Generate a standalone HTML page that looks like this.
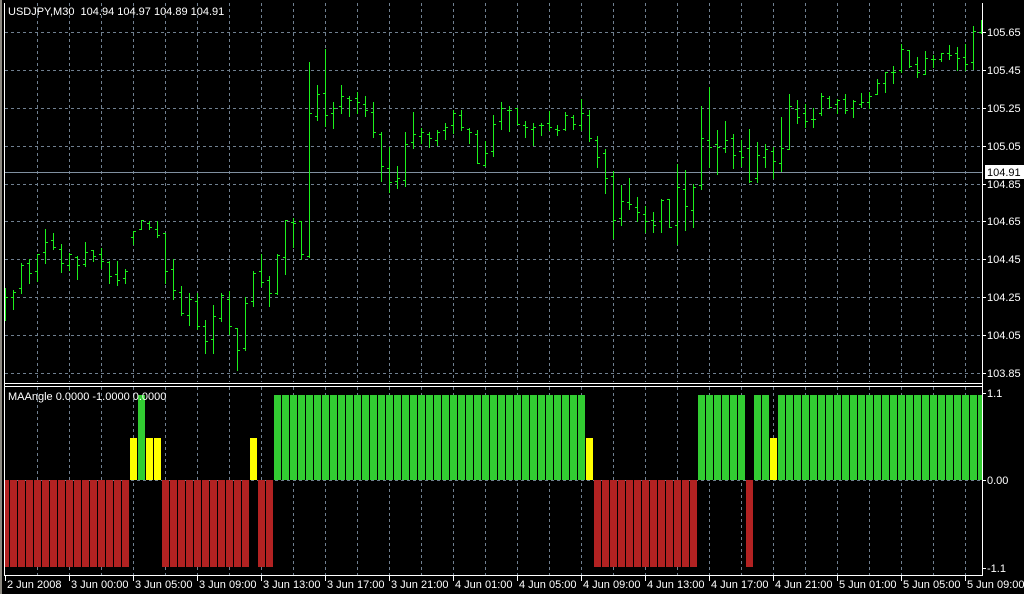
<!DOCTYPE html>
<html><head><meta charset="utf-8"><style>
html,body{margin:0;padding:0;background:#000;width:1024px;height:594px;overflow:hidden}
svg{display:block}
text{font-family:"Liberation Sans",sans-serif;font-size:11px;fill:#fff}
</style></head><body>
<svg id="s" width="1024" height="594" xmlns="http://www.w3.org/2000/svg" shape-rendering="crispEdges">
<rect width="1024" height="594" fill="#000"/>
<rect x="0" y="0" width="2" height="594" fill="#8c8880"/>
<g id="grid" stroke="#708090" stroke-width="1" stroke-dasharray="3,3"></g>
<line x1="4" y1="172.5" x2="982" y2="172.5" stroke="#8090a0"/>
<g id="bars" stroke="#1cf01c" stroke-width="1"></g>
<g id="hist"></g>
<g stroke="#fff" fill="none">
<line x1="4.5" y1="3" x2="4.5" y2="576"/>
<line x1="982.5" y1="3" x2="982.5" y2="576"/>
<line x1="4" y1="383.5" x2="983" y2="383.5"/>
<line x1="4" y1="386.5" x2="983" y2="386.5"/>
<line x1="4" y1="575.5" x2="983" y2="575.5"/>
</g>
<g id="ticks" stroke="#fff"></g>
<rect x="985" y="165" width="40" height="14" fill="#fff"/>
<text x="8" y="15">USDJPY,M30&#160;&#160;104.94 104.97 104.89 104.91</text>
<text x="8" y="400">MAAngle 0.0000 -1.0000 0.0000</text>
<text x="987" y="36">105.65</text>
<text x="987" y="74">105.45</text>
<text x="987" y="112">105.25</text>
<text x="987" y="150">105.05</text>
<text x="987" y="176" style="fill:#000">104.91</text>
<text x="987" y="188">104.85</text>
<text x="987" y="225">104.65</text>
<text x="987" y="263">104.45</text>
<text x="987" y="301">104.25</text>
<text x="987" y="339">104.05</text>
<text x="987" y="377">103.85</text>
<text x="987" y="397">1.1</text>
<text x="987" y="484">0.00</text>
<text x="987" y="572">-1.1</text>
<text x="7" y="588">2 Jun 2008</text>
<text x="71" y="588">3 Jun 00:00</text>
<text x="135" y="588">3 Jun 05:00</text>
<text x="199" y="588">3 Jun 09:00</text>
<text x="263" y="588">3 Jun 13:00</text>
<text x="327" y="588">3 Jun 17:00</text>
<text x="391" y="588">3 Jun 21:00</text>
<text x="455" y="588">4 Jun 01:00</text>
<text x="519" y="588">4 Jun 05:00</text>
<text x="583" y="588">4 Jun 09:00</text>
<text x="647" y="588">4 Jun 13:00</text>
<text x="711" y="588">4 Jun 17:00</text>
<text x="775" y="588">4 Jun 21:00</text>
<text x="839" y="588">5 Jun 01:00</text>
<text x="903" y="588">5 Jun 05:00</text>
<text x="967" y="588">5 Jun 09:00</text>
</svg>
<script>
var NS="http://www.w3.org/2000/svg";
function el(p,t,a){var e=document.createElementNS(NS,t);for(var k in a)e.setAttribute(k,a[k]);p.appendChild(e);return e;}
var g=document.getElementById('grid');
[32,70,108,146,184,221,259,297,335,373,480].forEach(function(y){el(g,'line',{x1:5,y1:y+.5,x2:982,y2:y+.5});});
for(var x=37;x<982;x+=32){el(g,'line',{x1:x+.5,y1:3,x2:x+.5,y2:382});el(g,'line',{x1:x+.5,y1:387,x2:x+.5,y2:575});}
var tk=document.getElementById('ticks');
for(var x=5;x<982;x+=64){el(tk,'line',{x1:x+.5,y1:576,x2:x+.5,y2:581});}
[32,70,108,146,184,221,259,297,335,373,393,480,568].forEach(function(y){el(tk,'line',{x1:982,y1:y+.5,x2:986,y2:y+.5});});
var d=[[288,320,295,297],[290,309,297,292],[263,293,288,265],[259,283,263,273],[254,281,271,254],[229,263,252,242],[233,249,240,247],[244,272,249,263],[253,270,265,254],[256,279,257,265],[242,266,264,252],[250,261,250,256],[248,268,254,261],[261,283,262,276],[261,285,274,280],[269,283,278,271],[231,244,237,231],[220,229,229,220],[221,229,223,227],[221,237,229,235],[233,283,233,271],[259,299,269,290],[286,315,292,313],[293,325,315,299],[293,329,301,326],[320,353,326,341],[305,353,339,316],[293,321,318,295],[291,334,299,326],[328,370,328,350],[297,350,348,303],[271,306,301,273],[254,286,271,282],[276,306,280,293],[254,294,293,255],[220,274,257,220],[218,247,222,223],[221,259,221,254],[62,257,256,113],[85,120,116,94],[49,126,93,115],
[102,128,113,108],[85,113,106,96],[96,116,98,100],[92,113,98,102],[96,116,104,110],[102,137,112,132],[132,181,134,166],[147,192,168,182],[166,188,181,178],[132,186,180,144],[112,148,142,134],[128,143,136,132],[132,147,134,138],[130,145,140,132],[123,139,130,127],[110,133,125,113],[110,130,115,127],[128,143,129,132],[130,163,134,163],[141,166,165,153],[115,156,151,124],[102,129,121,108],[106,131,110,110],[108,124,108,124],[121,137,125,127],[123,145,129,127],[123,135,125,125],[111,130,123,127],[125,135,129,130],[112,130,129,115],[115,129,117,124],[99,130,125,113],[110,141,115,138],[136,167,140,157],[149,193,153,178],[171,238,176,220],[185,225,218,201],[178,209,202,204],[197,221,207,212],[206,232,214,221],
[212,232,220,225],[199,232,221,200],[199,227,199,227],[164,244,225,187],[170,230,189,206],[184,227,210,187],[106,189,185,138],[87,167,140,147],[130,174,144,147],[121,152,148,140],[134,168,138,155],[140,166,151,157],[129,182,148,181],[142,182,178,155],[144,167,157,149],[147,178,151,161],[117,171,163,148],[94,149,149,106],[100,123,109,117],[104,127,113,121],[108,127,119,119],[93,115,113,96],[96,108,98,107],[99,113,104,100],[94,113,99,110],[100,117,108,101],[93,107,104,102],[92,108,102,96],[79,94,94,83],[72,92,83,72],[66,83,72,72],[44,72,70,49],[50,67,50,66],[57,77,64,72],[51,74,74,58],[55,67,59,59],[53,61,59,53],[45,59,53,55],[47,70,53,58],[44,70,57,64],[26,69,62,31],[20,33,32,32]];
var b=document.getElementById('bars');
d.forEach(function(v,i){var x=5+8*i+.5;el(b,'line',{x1:x,y1:v[0],x2:x,y2:v[1]+1});if(i>0)el(b,'line',{x1:x-2.5,y1:v[2]+.5,x2:x,y2:v[2]+.5});el(b,'line',{x1:x,y1:v[3]+.5,x2:Math.min(x+2.5,982),y2:v[3]+.5});});
var runs=[['R',16],['Y',1],['G',1],['Y',2],['R',11],['Y',1],['R',2],['G',39],['Y',1],['R',13],['G',6],['R',1],['G',2],['Y',1],['G',26]];
var seq="";runs.forEach(function(r){for(var k=0;k<r[1];k++)seq+=r[0];});
var h=document.getElementById('hist');
for(var i=0;i<seq.length;i++){var c=seq[i],x0=2+8*i,x1=x0+7;x0=Math.max(x0,5);x1=Math.min(x1,982);var w=x1-x0;
if(c=='R')el(h,'rect',{x:x0,y:480,width:w,height:87,fill:'#b22222'});
else if(c=='G')el(h,'rect',{x:x0,y:395,width:w,height:85,fill:'#32cd32'});
else el(h,'rect',{x:x0,y:438,width:w,height:42,fill:'#ffff00'});}
</script>
</body></html>
